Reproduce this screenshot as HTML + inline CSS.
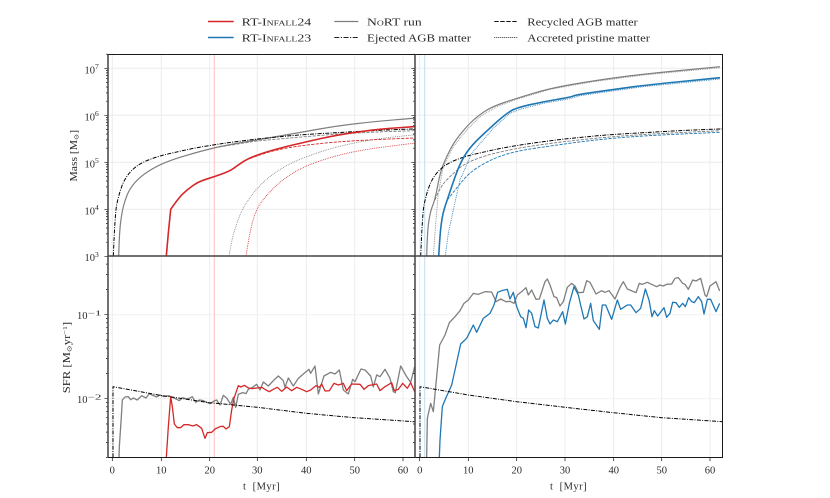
<!DOCTYPE html>
<html>
<head>
<meta charset="utf-8">
<style>
html,body{margin:0;padding:0;background:#fff;width:830px;height:498px;overflow:hidden}
svg{display:block}
text{font-family:"Liberation Serif","DejaVu Serif",serif;fill:#2a2a2a;font-size:10px}
.n{font-size:10.5px}
.sc{font-variant:small-caps}
.sup{font-size:7.5px}
.grid path{stroke:#ececec;stroke-width:1;fill:none}
.c{fill:none;stroke-linejoin:round;stroke-linecap:butt}
.solid{stroke-width:1.2}
.thick{stroke-width:1.6}
.dash{stroke-width:.9;stroke-dasharray:3.2 1.3}
.dot{stroke-width:.9;stroke-dasharray:.8 1}
.dd{stroke-width:1;stroke-dasharray:4 1.3 1 1.3;stroke:#000}
.s{fill:none;stroke-linejoin:round;stroke-width:3.9}
</style>
</head>
<body>
<svg width="830" height="498" viewBox="0 0 830 498" xmlns="http://www.w3.org/2000/svg">
<defs>
<clipPath id="cl"><rect x="108" y="54" width="307" height="404"/></clipPath>
<clipPath id="cr"><rect x="415" y="54" width="308" height="404"/></clipPath>
<path id="tk" fill="none" stroke="#111" stroke-width=".7" d="M108 68.3h-3.6M108 115.3h-3.6M108 162.3h-3.6M108 209.3h-3.6M108 256.3h-3.6M108 314.7h-3.6M108 398.7h-3.6
M108 54.2h-2M108 101.2h-2M108 92.9h-2M108 87h-2M108 82.4h-2M108 78.7h-2M108 75.6h-2M108 72.9h-2M108 70.5h-2
M108 148.2h-2M108 139.9h-2M108 134h-2M108 129.4h-2M108 125.7h-2M108 122.6h-2M108 119.9h-2M108 117.5h-2
M108 195.2h-2M108 186.9h-2M108 181h-2M108 176.4h-2M108 172.7h-2M108 169.6h-2M108 166.9h-2M108 164.5h-2
M108 242.2h-2M108 233.9h-2M108 228h-2M108 223.4h-2M108 219.7h-2M108 216.6h-2M108 213.9h-2M108 211.5h-2
M108 289.4h-2M108 274.6h-2M108 264.1h-2
M108 373.4h-2M108 358.6h-2M108 348.1h-2M108 340h-2M108 333.3h-2M108 327.7h-2M108 322.8h-2M108 318.5h-2
M108 402.5h-2M108 406.8h-2M108 411.7h-2M108 417.3h-2M108 424h-2M108 432.1h-2M108 442.6h-2M108 457.4h-2"/>
<path id="ej" d="M113.3 256.3Q115 213.3 116.65 205Q118.3 196.7 120.8 189.2Q123.3 181.7 126.65 176.7Q130 171.7 135 167.5Q140 163.3 148.35 160Q156.7 156.7 165 154.7Q173.3 152.7 183.3 150.5Q193.3 148.3 203.8 146.5Q214.3 144.7 223.8 143.35Q233.3 142 245 140.5Q256.7 139 268.35 137.85Q280 136.7 293.35 135.5Q306.7 134.3 321.7 133.5Q336.7 132.7 356.7 131.5Q376.7 130.3 395 129.65Q413.3 129 416 128.8"/>
</defs>

<!-- grid -->
<g class="grid">
<path d="M112.3 54.5V457.5M161.3 54.5V457.5M209.7 54.5V457.5M257.3 54.5V457.5M306.3 54.5V457.5M354.7 54.5V457.5M403 54.5V457.5"/>
<path d="M419.7 54.5V457.5M468.3 54.5V457.5M516.7 54.5V457.5M565 54.5V457.5M613.7 54.5V457.5M661.7 54.5V457.5M710 54.5V457.5"/>
<path d="M108 68.3H722M108 115.3H722M108 162.3H722M108 209.3H722"/>
<path style="stroke:#f1f1f1" d="M108 314.7H722M108 398.7H722"/>
</g>

<!-- reference lines -->
<path d="M214.3 54.5V457.5" stroke="#f9c6c6" stroke-width="1.1" fill="none"/>
<path d="M424.7 54.5V457.5" stroke="#c3dff3" stroke-width="1.1" fill="none"/>

<!-- left top -->
<g clip-path="url(#cl)">
<path class="c dot" stroke="#7f7f7f" d="M229 256.3Q231.7 240 234.2 231.65Q236.7 223.3 240 215Q243.3 206.7 250 197.5Q256.7 188.3 265 180.8Q273.3 173.3 283.3 167.5Q293.3 161.7 306.65 156.7Q320 151.7 333.35 148Q346.7 144.3 363.35 141.3Q380 138.3 396.65 136.65Q413.3 135 416 134.7"/>
<polyline class="c dash" stroke="#7f7f7f" points="214.3,147.7 256.7,141 293.3,137.7 336.7,134 376.7,132 413.3,130.7 416,130.5"/>
<path class="c solid" stroke="#7f7f7f" d="M118.7 256.3Q119.3 233.3 120.5 223.3Q121.7 213.3 123.35 206.65Q125 200 127.5 194.15Q130 188.3 135 182.5Q140 176.7 148.35 171.35Q156.7 166 165 162.65Q173.3 159.3 183.3 156.3Q193.3 153.3 203.8 150.5Q214.3 147.7 225.5 145.5Q236.7 143.3 246.7 141.65Q256.7 140 268.35 138Q280 136 293.35 133.65Q306.7 131.3 321.7 128.65Q336.7 126 356.7 123.65Q376.7 121.3 395 119.8Q413.3 118.3 416 118"/>
<use href="#ej" class="c dd"/>
<path class="c dot" stroke="#d62728" d="M246 256.3Q250 230 253.35 219.15Q256.7 208.3 261.7 201.65Q266.7 195 273.35 188.35Q280 181.7 290 175Q300 168.3 313.35 163.3Q326.7 158.3 343.35 154.15Q360 150 386.65 146.65Q413.3 143.3 416 143"/>
<path class="c dash" stroke="#d62728" d="M250 158.5Q256.7 156 265 153.35Q273.3 150.7 283.3 148.7Q293.3 146.7 310 144.7Q326.7 142.7 343.35 141.5Q360 140.3 386.65 139.15Q413.3 138 416 137.9"/>
<path class="c thick" stroke="#d62728" d="M166.3 256.3L168.3 233.3L170.7 209.3Q178.3 198.3 182.5 194.15Q186.7 190 192.5 185.85Q198.3 181.7 206.3 179.2Q214.3 176.7 222.15 173.85Q230 171 233.35 168.5Q236.7 166 241.7 162.65Q246.7 159.3 253.35 156.65Q260 154 270 151Q280 148 293.35 144.85Q306.7 141.7 321.7 138.35Q336.7 135 356.7 132.15Q376.7 129.3 395 128Q413.3 126.7 416 126.5"/>
</g>

<!-- right top -->
<g clip-path="url(#cr)">
<polyline class="c dot" stroke="#7f7f7f" points="433.3,256.3 436,220 438.3,193.3 443.3,166.7 453.3,146.7 466.7,130 480,116.7 496.7,106.7 516.7,99.3 550,89.3 593.3,81.7 643.3,75 720,67.7"/>
<path class="c dash" stroke="#7f7f7f" d="M435 200Q440 186.7 446.65 180Q453.3 173.3 459.15 168.3Q465 163.3 475.85 159.15Q486.7 155 501.7 151.65Q516.7 148.3 533.35 145.8Q550 143.3 571.65 140.8Q593.3 138.3 618.3 136.3Q643.3 134.3 681.65 132.5Q700 131.6 720 130.7"/>
<path class="c solid" stroke="#7f7f7f" d="M426.7 256.3Q427.3 230 429 220Q430.7 210 432.85 205Q435 200 437.5 186.65Q440 173.3 442.5 166.65Q445 160 449.15 151.65Q453.3 143.3 459.15 135.8Q465 128.3 470.85 122.5Q476.7 116.7 484.2 111.7Q491.7 106.7 504.2 102.5Q516.7 98.3 533.35 93.3Q550 88.3 571.65 84.5Q593.3 80.7 618.3 77.35Q643.3 74 681.65 70.35Q700 68.6 720 66.7"/>
<use href="#ej" class="c dd" transform="translate(307.4 0)"/>
<polyline class="c dot" stroke="#1f77b4" points="445.3,256.3 448.3,233.3 453.3,210 460,180 471.7,153.3 493.3,128.3 510,113.3 520,109.3 543.3,103.3 570,98.7 580,95.7 610,91.3 643.3,86.7 720,79"/>
<path class="c dash" stroke="#1f77b4" d="M447.3 200Q455 190 462.5 180.85Q470 171.7 481.65 165Q493.3 158.3 505 154.65Q516.7 151 533.35 148.5Q550 146 571.65 143Q593.3 140 618.3 137.85Q643.3 135.7 681.65 134Q700 133.2 720 132.3"/>
<path class="c thick" stroke="#1f77b4" d="M438.7 256.3Q440 233.3 441.35 223.3Q442.7 213.3 445.5 205Q448.3 196.7 451.65 186.7Q455 176.7 458.35 168.35Q461.7 160 466.7 152.5Q471.7 145 482.5 135Q493.3 125 500 119.15Q506.7 113.3 511.7 110.5Q516.7 107.7 530 104.7Q543.3 101.7 556.65 99.5Q570 97.3 573.35 96Q576.7 94.7 593.35 92.35Q610 90 626.65 87.65Q643.3 85.3 681.65 81.5Q700 79.7 720 77.7"/>
</g>

<!-- left bottom -->
<g clip-path="url(#cl)"><g transform="translate(60 250) scale(.33333)">
<polyline class="s" stroke="#7f7f7f" points="177,622 178,590 184,500 187,450 195,441 205,440 212,449 220,444 232,450 245,437 258,444 268,431 280,437 290,441 300,435 312,440 325,437 338,442 350,448 358,452 368,443 380,447 390,444 397,440 407,457 418,450 430,452 442,458 450,461 462,453 470,450 480,465 490,436 500,444 512,463 520,442 527,472 535,433 548,428 558,431 565,418 578,412 590,403 600,420 610,396 625,408 640,392 655,378 670,392 675,412 685,384 700,408 715,385 730,372 747,358 752,370 765,348 775,432 792,378 812,367 825,372 838,360 850,420 865,432 878,388 885,395 903,357 915,360 932,378 940,411 950,375 960,380 975,358 990,385 1000,425 1006,428 1022,348 1040,380 1052,397 1064,350"/>
<polyline class="s" stroke="#d62728" points="319,622 325,530 332,440 337,470 343,522 352,533 362,533 372,524 385,524 398,528 410,524 425,535 435,565 442,548 455,547 465,537 480,530 490,529 498,537 508,530 515,480 522,445 535,407 543,411 553,406 565,414 578,416 590,414 605,412 618,420 628,425 640,418 652,412 665,424 680,411 695,422 710,412 725,418 740,425 752,420 768,407 778,412 785,402 795,423 808,422 822,400 835,405 850,400 860,422 875,402 900,403 912,418 925,407 950,402 960,422 975,410 995,398 1003,422 1015,418 1028,400 1042,415 1052,398 1064,425"/>
</g>
<polyline class="c dd" points="113,457.3 113,386.7 160,395.3 209.7,402.7 257.3,407.3 306.3,413.3 354.3,417.7 416,421.8"/>
</g>

<!-- right bottom -->
<g clip-path="url(#cr)"><g transform="translate(410 250) scale(.33333)">
<polyline class="s" stroke="#7f7f7f" points="50,622 52,505 62,460 70,485 89,285 105,255 118,218 135,200 150,182 162,160 175,150 190,130 205,133 225,125 245,126 258,155 272,147 288,155 300,154 312,160 322,135 335,125 348,113 355,135 365,120 378,148 388,147 405,95 412,87 420,105 432,140 440,143 450,168 460,155 472,112 485,100 495,108 505,128 520,127 530,92 540,97 558,132 575,122 585,127 597,122 615,147 630,112 640,95 652,117 678,128 688,100 697,103 712,97 740,110 750,105 760,108 770,103 785,102 795,85 805,83 818,100 825,103 835,118 848,90 858,93 872,85 885,135 890,140 900,108 918,95 929,123"/>
<polyline class="s" stroke="#1f77b4" points="88,622 90,570 97,470 105,450 125,405 135,360 152,282 170,265 190,225 200,247 220,205 240,190 252,165 263,127 275,122 292,118 300,147 310,127 320,170 332,200 340,205 348,233 356,180 365,190 375,230 385,234 402,150 412,205 420,222 430,210 442,215 458,185 466,222 478,160 492,110 505,135 513,170 522,207 532,200 542,160 550,212 568,238 577,165 587,165 605,208 622,150 632,178 652,165 662,165 678,188 692,175 706,117 717,150 726,200 733,182 743,198 762,173 770,202 780,190 788,157 798,158 808,172 818,160 826,170 836,143 845,155 853,158 865,140 875,155 882,192 892,148 902,148 918,185 929,160"/>
</g>
<polyline class="c dd" points="420,457.3 420,386.7 468.3,395 516.7,401.7 565,407.3 613.3,412.7 661.7,417.7 722.3,421.7"/>
</g>

<!-- ticks -->
<use href="#tk"/>
<use href="#tk" x="307"/>
<path fill="none" stroke="#111" stroke-width=".7" d="M112.3 457.5v3.6M161.3 457.5v3.6M209.7 457.5v3.6M257.3 457.5v3.6M306.3 457.5v3.6M354.7 457.5v3.6M403 457.5v3.6M419.7 457.5v3.6M468.3 457.5v3.6M516.7 457.5v3.6M565 457.5v3.6M613.7 457.5v3.6M661.7 457.5v3.6M710 457.5v3.6"/>

<!-- spines -->
<path fill="none" stroke="#1a1a1a" stroke-width="1" d="M108 54.5H722.5V457.5H108"/>
<path fill="none" stroke="#444" stroke-width="1.5" d="M108 54.5V457.5M415 54.5V457.5M108 256H722.5"/>

<!-- y tick labels -->
<text class="n" x="84.5" y="73.3">10</text><text class="sup" x="95" y="69">7</text>
<text class="n" x="84.5" y="120.3">10</text><text class="sup" x="95" y="116">6</text>
<text class="n" x="84.5" y="167.3">10</text><text class="sup" x="95" y="163">5</text>
<text class="n" x="84.5" y="214.3">10</text><text class="sup" x="95" y="210">4</text>
<text class="n" x="84.5" y="261">10</text><text class="sup" x="95" y="257">3</text>
<text class="n" x="77" y="319.2">10</text><text class="sup" x="87.5" y="315.5" textLength="14" lengthAdjust="spacingAndGlyphs">−1</text>
<text class="n" x="77" y="403.2">10</text><text class="sup" x="87.5" y="399.5" textLength="14" lengthAdjust="spacingAndGlyphs">−2</text>

<!-- x tick labels -->
<g text-anchor="middle">
<text class="n" x="112.3" y="473.5">0</text><text class="n" x="161.3" y="473.5">10</text><text class="n" x="209.7" y="473.5">20</text><text class="n" x="257.3" y="473.5">30</text><text class="n" x="306.3" y="473.5">40</text><text class="n" x="354.7" y="473.5">50</text><text class="n" x="403" y="473.5">60</text>
<text class="n" x="419.7" y="473.5">0</text><text class="n" x="468.3" y="473.5">10</text><text class="n" x="516.7" y="473.5">20</text><text class="n" x="565" y="473.5">30</text><text class="n" x="613.7" y="473.5">40</text><text class="n" x="661.7" y="473.5">50</text><text class="n" x="710" y="473.5">60</text>
</g>
<text class="n" x="243" y="489.5" textLength="36.6" lengthAdjust="spacing" xml:space="preserve">t  [Myr]</text>
<text class="n" x="550" y="489.5" textLength="36.6" lengthAdjust="spacing" xml:space="preserve">t  [Myr]</text>

<!-- y axis labels -->
<text transform="translate(77 181.5) rotate(-90)" textLength="51.7" lengthAdjust="spacingAndGlyphs">Mass [M<tspan font-size="6.5" dy="1.5">⊙</tspan><tspan dy="-1.5">]</tspan></text>
<text transform="translate(70 393.3) rotate(-90)" textLength="71.6" lengthAdjust="spacingAndGlyphs">SFR [M<tspan font-size="6.5" dy="1.5">⊙</tspan><tspan dy="-1.5">yr</tspan><tspan font-size="6.5" dy="-3">−1</tspan><tspan dy="3">]</tspan></text>

<!-- legend -->
<path d="M208 21.5h25.7" stroke="#d62728" stroke-width="1.6"/>
<path d="M208 37.5h25.7" stroke="#1f77b4" stroke-width="1.6"/>
<path d="M334.3 21.5h24" stroke="#7f7f7f" stroke-width="1.2"/>
<path d="M334.3 37.5h24" stroke="#222" stroke-width="1" stroke-dasharray="5 1.5 1.2 1.5"/>
<path d="M494.3 21.5h23.4" stroke="#111" stroke-width="1" stroke-dasharray="4.4 1.6"/>
<path d="M494.3 37.5h23.4" stroke="#222" stroke-width=".9" stroke-dasharray=".9 1.1"/>
<text class="sc" x="241.7" y="25.7" textLength="69.6" lengthAdjust="spacingAndGlyphs">RT-Infall24</text>
<text class="sc" x="241.7" y="41.7" textLength="69.6" lengthAdjust="spacingAndGlyphs">RT-Infall23</text>
<text x="367" y="25.7" textLength="54.7" lengthAdjust="spacingAndGlyphs" xml:space="preserve">N<tspan class="sc">o</tspan>RT run</text>
<text x="367" y="41.7" textLength="104" lengthAdjust="spacingAndGlyphs">Ejected AGB matter</text>
<text x="527.3" y="25.7" textLength="110.4" lengthAdjust="spacingAndGlyphs">Recycled AGB matter</text>
<text x="527.3" y="41.7" textLength="122.7" lengthAdjust="spacingAndGlyphs">Accreted pristine matter</text>
</svg>
</body>
</html>
